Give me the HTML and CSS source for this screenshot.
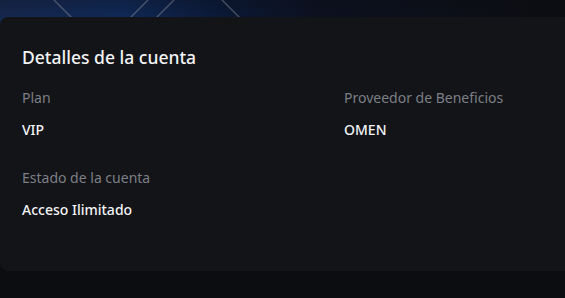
FILE: index.html
```html
<!DOCTYPE html>
<html lang="es">
<head>
<meta charset="utf-8">
<link rel="stylesheet" href="styles.css">
</head>
<body>
<div class="hero">
  <svg class="hero-art" width="565" height="30" viewBox="0 0 565 30" xmlns="http://www.w3.org/2000/svg">
    <defs>
      <linearGradient id="g" x1="0" y1="0" x2="1" y2="0">
        <stop offset="0" stop-color="#172c58"/>
        <stop offset="0.22" stop-color="#102d62"/>
        <stop offset="0.4" stop-color="#0a1a3c"/>
        <stop offset="0.55" stop-color="#0c1224"/>
        <stop offset="1" stop-color="#0c0d11"/>
      </linearGradient>
      <linearGradient id="v" x1="0" y1="0" x2="0" y2="1">
        <stop offset="0" stop-color="#0c0d11" stop-opacity="0.35"/>
        <stop offset="1" stop-color="#0c0d11" stop-opacity="0"/>
      </linearGradient>
    </defs>
    <rect x="0" y="0" width="565" height="30" fill="url(#g)"/>
    <rect x="0" y="0" width="565" height="30" fill="url(#v)"/>
    <g stroke="#9a9ca4" stroke-opacity="0.45" stroke-width="1.3" fill="none">
      <line x1="54" y1="0" x2="84" y2="30"/>
      <line x1="148" y1="0" x2="118" y2="30"/>
      <line x1="174" y1="0" x2="144" y2="30"/>
      <line x1="222" y1="0" x2="252" y2="30"/>
    </g>
  </svg>
</div>
<section class="card">
  <h2 class="title">Detalles de la cuenta</h2>
  <div class="grid">
    <div class="field">
      <div class="label">Plan</div>
      <div class="value">VIP</div>
    </div>
    <div class="field">
      <div class="label">Proveedor de Beneficios</div>
      <div class="value">OMEN</div>
    </div>
    <div class="field">
      <div class="label">Estado de la cuenta</div>
      <div class="value">Acceso Ilimitado</div>
    </div>
  </div>
</section>
</body>
</html>
```
FILE: styles.css
```css
html, body {
  margin: 0;
  padding: 0;
}
body {
  background: #0c0d11;
  width: 565px;
  height: 298px;
  overflow: hidden;
  position: relative;
  font-family: "Noto Sans", "Open Sans", sans-serif;
}
.hero {
  height: 17px;
}
.hero-art {
  position: absolute;
  left: 0;
  top: 0;
  display: block;
}
.card {
  position: relative;
  background: #131418;
  border-radius: 8px 0 0 8px;
  width: 565px;
  height: 254px;
  box-sizing: border-box;
  padding: 27px 22px 0 22px;
}
.title {
  margin: 0;
  color: #f2f3f5;
  font-size: 17.5px;
  font-weight: 500;
  line-height: 26px;
}
.grid {
  margin-top: 18px;
  display: grid;
  grid-template-columns: 322px 1fr;
  row-gap: 28px;
}
.field {
  display: flex;
  flex-direction: column;
  gap: 12px;
}
.label {
  color: #7c7f86;
  font-size: 14px;
  line-height: 20px;
}
.value {
  color: #f2f3f5;
  font-size: 14px;
  font-weight: 500;
  line-height: 20px;
}
```
